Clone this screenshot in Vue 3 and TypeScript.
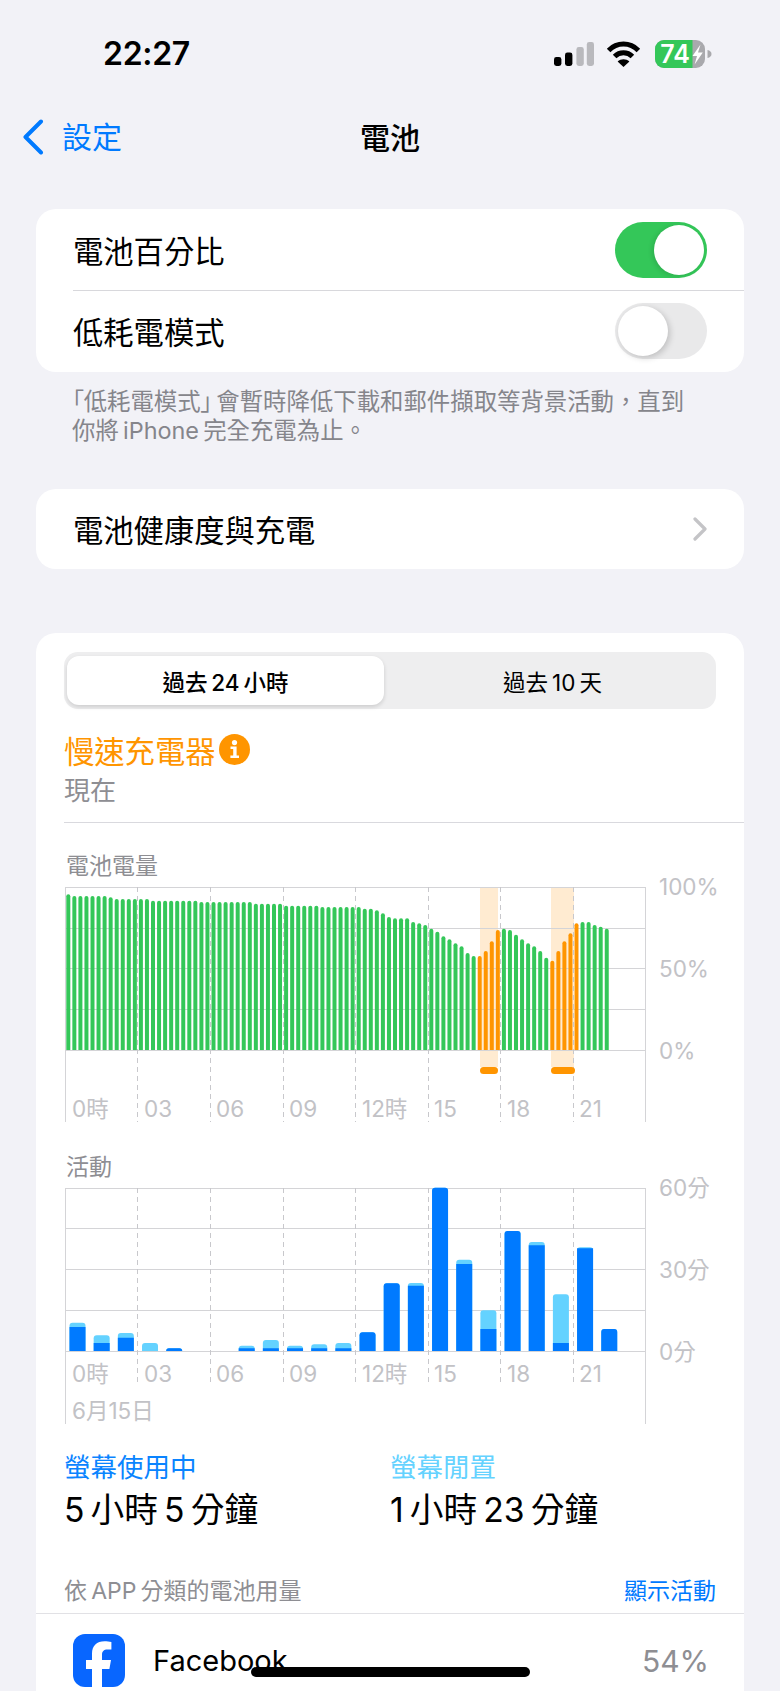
<template>
  <div class="page">
    <header class="status">
      <span class="time">22:27</span>
      <div class="status-icons">
        <svg class="signal" width="40" height="24" viewBox="0 0 40 24">
          <rect x="0" y="15" width="7.4" height="9" rx="2.4" fill="#000" />
          <rect x="11" y="10.6" width="7.4" height="13.4" rx="2.4" fill="#000" />
          <rect x="22.4" y="5" width="7.4" height="19" rx="2.4" fill="#b9b9bd" />
          <rect x="32.8" y="0" width="7.2" height="24" rx="2.4" fill="#b9b9bd" />
        </svg>
        <svg width="35" height="26" viewBox="0 0 35 26">
          <path d="M2.6 9.4C11 1 24 1 32.4 9.4" fill="none" stroke="#000" stroke-width="5" stroke-linecap="butt" />
          <path d="M8.6 15.6C13.6 10.6 21.4 10.6 26.4 15.6" fill="none" stroke="#000" stroke-width="5" />
          <path d="M11.6 20.6C15 17.6 20 17.6 23.4 20.6L17.5 26Z" fill="#000" />
        </svg>
        <svg width="57" height="28" viewBox="0 0 57 28">
          <rect x="0" y="0" width="50" height="28" rx="9" fill="#a9a9ad" />
          <path d="M9 0H37.5V28H9A9 9 0 0 1 0 19V9A9 9 0 0 1 9 0Z" fill="#34c759" />
          <path d="M52.5 10C55 10.6 56.5 12 56.5 14S55 17.4 52.5 18Z" fill="#a9a9ad" />
          <text x="20" y="23" text-anchor="middle" class="batt-text">74</text>
          <path d="M45.5 4.5L37.5 16H42L39.6 24.5L47.8 12.4H43Z" fill="#fff" />
        </svg>
      </div>
    </header>

    <nav class="nav">
      <div class="back">
        <svg width="22" height="36" viewBox="0 0 22 36">
          <path d="M19 2.5L3.5 18L19 33.5" fill="none" stroke="#007aff" stroke-width="4" stroke-linecap="round" stroke-linejoin="round" />
        </svg>
        <span>設定</span>
      </div>
      <h1 class="title">電池</h1>
    </nav>

    <section class="card">
      <div class="row">
        <span>電池百分比</span>
        <div class="toggle on"><i></i></div>
      </div>
      <div class="row">
        <span>低耗電模式</span>
        <div class="toggle"><i></i></div>
      </div>
    </section>
    <p class="footnote"><span class="tight">「低耗電模式」</span>會暫時降低下載和郵件擷取等背景活動&#xFF0C;直到<br />你將&thinsp;iPhone&thinsp;完全充電為止。</p>

    <section class="card health">
      <span>電池健康度與充電</span>
      <svg width="14" height="24" viewBox="0 0 14 24">
        <path d="M2 2L12 12L2 22" fill="none" stroke="#c4c4c7" stroke-width="3.2" stroke-linecap="round" stroke-linejoin="round" />
      </svg>
    </section>

    <section class="card usage">
      <div class="segment">
        <div class="seg-item active">過去&thinsp;24&thinsp;小時</div>
        <div class="seg-item second-seg">過去&thinsp;10&thinsp;天</div>
      </div>

      <div class="charger">
        <span>慢速充電器</span>
        <svg width="31" height="31" viewBox="0 0 31 31">
          <circle cx="15.5" cy="15.5" r="15.5" fill="#ff9500" />
          <circle cx="15.5" cy="8.6" r="2.6" fill="#fff" />
          <path d="M11.5 12.6H17.6V21.6H20V24H11.4V21.6H14.2V15H11.5Z" fill="#fff" />
        </svg>
      </div>
      <div class="now">現在</div>
      <div class="divider"></div>

      <div class="chart-label first">電池電量</div>
      <svg class="chart" width="670" height="245" viewBox="60 880 670 245">
        <rect v-for="b in bands" :key="b.x" :x="b.x" y="887" :width="b.w" height="180" fill="#ffebd1" />
        <line v-for="y in levelLines" :key="y" x1="65.5" x2="645.5" :y1="y" :y2="y" class="grid" />
        <line x1="65.5" x2="65.5" y1="887" y2="1122" class="grid" />
        <line x1="645.5" x2="645.5" y1="887" y2="1122" class="grid" />
        <line v-for="x in dashX" :key="x" :x1="x" :x2="x" y1="887" y2="1122" class="dash" />
        <path v-for="b in levelBars" :key="b.x" :d="topRound(b.x, b.y, 4, 1050 - b.y, 2)" :fill="b.color" />
        <rect v-for="b in bands" :key="'p' + b.x" :x="b.x" y="1067" :width="b.pw" height="7" rx="3.5" fill="#ff9500" />
        <text v-for="h in hours" :key="h.t" :x="h.x" y="1117" class="hour">{{ h.t }}</text>
        <text x="659" y="895" class="axis">100%</text>
        <text x="659" y="977" class="axis">50%</text>
        <text x="659" y="1059" class="axis">0%</text>
      </svg>

      <div class="chart-label second">活動</div>
      <svg class="chart" width="670" height="249" viewBox="60 1181 670 249">
        <line v-for="y in activityLines" :key="y" x1="65.5" x2="645.5" :y1="y" :y2="y" class="grid" />
        <line x1="65.5" x2="65.5" y1="1188" y2="1424" class="grid" />
        <line x1="645.5" x2="645.5" y1="1188" y2="1424" class="grid" />
        <line v-for="x in dashX" :key="x" :x1="x" :x2="x" y1="1188" y2="1383" class="dash" />
        <template v-for="b in activityBars" :key="b.x">
          <path v-if="b.lightY < 1351" :d="topRound(b.x, b.lightY, 16, 1351 - b.lightY, 3)" fill="#64d2ff" />
          <path v-if="b.darkY < 1351" :d="topRound(b.x, b.darkY, 16, 1351 - b.darkY, b.darkY === b.lightY ? 3 : 0)" fill="#007aff" />
        </template>
        <text v-for="h in hours" :key="h.t" :x="h.x" y="1382" class="hour">{{ h.t }}</text>
        <text x="72" y="1419" class="hour">6月15日</text>
        <text x="659" y="1196" class="axis">60分</text>
        <text x="659" y="1278" class="axis">30分</text>
        <text x="659" y="1360" class="axis">0分</text>
      </svg>

      <div class="totals">
        <div class="total">
          <div class="total-label blue">螢幕使用中</div>
          <div class="total-value">5&thinsp;小時&thinsp;5&thinsp;分鐘</div>
        </div>
        <div class="total">
          <div class="total-label cyan">螢幕閒置</div>
          <div class="total-value">1&thinsp;小時&thinsp;23&thinsp;分鐘</div>
        </div>
      </div>

      <div class="list-head">
        <span>依&thinsp;APP&thinsp;分類的電池用量</span>
        <span class="show">顯示活動</span>
      </div>

      <div class="app-row">
        <svg width="52" height="53" viewBox="0 0 52 53">
          <rect width="52" height="53" rx="12" fill="#0866ff" />
          <path d="M29 53V35H36.4L38 26H29V21C29 17.6 30.6 15.6 34.6 15.6H38.4V8C36.4 7.6 33.8 7.2 31.6 7.2C23.8 7.2 19 11.6 19 19.6V26H13V35H19V53Z" fill="#fff" />
        </svg>
        <span class="app-name">Facebook</span>
        <span class="app-pct">54%</span>
      </div>
    </section>

    <div class="home-bar"></div>
  </div>
</template>

<script setup lang="ts">
interface Band {
  x: number;
  w: number;
  pw: number;
}

const topRound = (x: number, y: number, w: number, h: number, r: number) => {
  const rr = Math.min(r, h);
  return `M${x} ${y + h}V${y + rr}Q${x} ${y} ${x + rr} ${y}H${x + w - rr}Q${x + w} ${y} ${x + w} ${y + rr}V${y + h}Z`;
};

// bar tops read off the reference, in thirds of a pixel above the 0% line
const levelTops = [
  133, 138, 138, 138, 138, 138, 138, 142, 147, 147, 147, 147, 147, 147, 152, 152, 152, 152, 152, 152, 152, 152,
  156, 156, 156, 156, 156, 156, 156, 156, 156, 161, 161, 161, 161, 161, 167, 167, 167, 167, 167, 167,
  171, 171, 171, 171, 171, 171, 171, 176, 176, 181, 190, 201, 205, 205, 205, 216, 220, 225, 236, 245,
  259, 268, 280, 289, 309, 318, 318, 303, 274, 240, 236, 240, 254, 268, 280, 289, 303, 323, 332, 303,
  274, 250, 220, 216, 216, 225, 230, 236,
];

const isCharging = (i: number) => (i >= 68 && i <= 71) || (i >= 80 && i <= 84);

const levelBars = levelTops.map((top, i) => ({
  x: 66.3 + i * 6.05,
  y: 850 + top / 3,
  color: isCharging(i) ? '#ff9500' : '#34c759',
}));

const bands: Band[] = [
  { x: 480, w: 18, pw: 18 },
  { x: 551, w: 23, pw: 24 },
];

const levelLines = [887.5, 928.5, 968.5, 1009.5, 1050.5];
const activityLines = [1188.5, 1228.5, 1269.5, 1310.5, 1351.5];
const dashX = [137.5, 210.5, 283.5, 355.5, 428.5, 500.5, 573.5];

const hours = [
  { t: '0時', x: 72 },
  { t: '03', x: 144 },
  { t: '06', x: 216 },
  { t: '09', x: 289 },
  { t: '12時', x: 362 },
  { t: '15', x: 434 },
  { t: '18', x: 507 },
  { t: '21', x: 579 },
];

// [top of whole bar, top of dark part], 603 means empty
const activity: [number, number][] = [
  [518, 531], [556, 579], [549, 563], [579, 603], [595, 595], [603, 603], [603, 603], [587, 595],
  [570, 595], [587, 595], [583, 595], [579, 595], [547, 547], [400, 400], [399, 407], [113, 113],
  [329, 342], [481, 537], [243, 243], [276, 286], [433, 579], [292, 295], [537, 537],
];

const activityBars = activity.map(([light, dark], i) => ({
  x: 69.5 + i * 24.17,
  lightY: 1150 + light / 3,
  darkY: 1150 + dark / 3,
}));
</script>

<style scoped>
.page {
  position: relative;
  width: 780px;
  height: 1691px;
  overflow: hidden;
  background: #f2f2f7;
  color: #000;
  font-family: Inter, "Noto Sans CJK TC", sans-serif;
}

.status {
  height: 107px;
  display: flex;
  align-items: center;
  justify-content: space-between;
  padding: 0 68px 0 103px;
  box-sizing: border-box;
}

.time {
  font-size: 32px;
  font-weight: 600;
  letter-spacing: -0.3px;
}

.status-icons {
  display: flex;
  align-items: center;
  gap: 14px;
}

.signal {
  margin-right: -2px;
}

.batt-text {
  font-family: Inter, sans-serif;
  font-size: 25px;
  font-weight: 600;
  fill: #fff;
}

.nav {
  position: relative;
  height: 60px;
  display: flex;
  align-items: center;
  justify-content: center;
}

.back {
  position: absolute;
  left: 22px;
  top: 12px;
  display: flex;
  align-items: center;
  gap: 18px;
  color: #007aff;
  font-size: 30px;
  line-height: 36px;
}

.title {
  margin: -2px 0 0;
  font-size: 30px;
  font-weight: 500;
}

.card {
  margin: 42px 36px 0;
  background: #fff;
  border-radius: 20px;
}

.row {
  position: relative;
  height: 81px;
  display: flex;
  align-items: center;
  justify-content: space-between;
  padding: 0 37px;
  font-size: 30.3px;
}

.row + .row {
  height: 82px;
}

.row + .row::before {
  content: '';
  position: absolute;
  left: 37px;
  right: 0;
  top: 0;
  height: 1px;
  background: #d8d8dc;
}

.toggle {
  position: relative;
  width: 92px;
  height: 56px;
  border-radius: 28px;
  background: #e9e9ea;
}

.toggle i {
  position: absolute;
  top: 3px;
  left: 3px;
  width: 50px;
  height: 50px;
  border-radius: 50%;
  background: #fff;
  box-shadow: 2px 2px 6px rgba(0, 0, 0, 0.18);
}

.toggle.on {
  background: #34c759;
}

.toggle.on i {
  left: 39px;
  box-shadow: -2px 1px 5px rgba(0, 0, 0, 0.12);
}

.footnote {
  margin: 15px 40px 0 72px;
  color: #85858b;
  font-size: 23.4px;
  line-height: 29px;
}

.tight {
  margin-right: 4px;
  font-feature-settings: "palt";
}

.health {
  margin-top: 44px;
  height: 80px;
  display: flex;
  align-items: center;
  justify-content: space-between;
  padding: 0 37px;
  font-size: 30.3px;
}

.usage {
  margin-top: 64px;
  padding-top: 19px;
  height: 1100px;
  border-radius: 20px 20px 0 0;
}

.segment {
  margin: 0 28px;
  height: 57px;
  padding: 4px 3px;
  box-sizing: border-box;
  display: grid;
  grid-template-columns: 317px 1fr;
  background: #eeeeef;
  border-radius: 14px;
}

.seg-item {
  display: flex;
  align-items: center;
  justify-content: center;
  font-size: 22.5px;
  white-space: pre;
}

.second-seg {
  padding-left: 8px;
}

.seg-item.active {
  background: #fff;
  border-radius: 12px;
  font-weight: 500;
  box-shadow: 0 2px 4px rgba(0, 0, 0, 0.14);
}

.charger {
  margin: 25px 0 0 28px;
  height: 31px;
  display: flex;
  align-items: center;
  gap: 4px;
  color: #ff9500;
  font-size: 30.3px;
}

.now {
  margin: 8px 0 0 28px;
  color: #8e8e93;
  font-size: 26px;
  line-height: 36px;
}

.divider {
  margin: 13px 0 0 28px;
  height: 1px;
  background: #d9d9de;
}

.chart-label {
  margin-left: 30px;
  color: #8e8e93;
  font-size: 23px;
  line-height: 28px;
}

.chart-label.first {
  margin-top: 29px;
}

.chart-label.second {
  margin-top: 28px;
}

.chart {
  display: block;
  margin: 0 0 0 24px;
  overflow: visible;
}

.grid {
  stroke: #d4d4d7;
  stroke-width: 1;
}

.dash {
  stroke: #c8c8cc;
  stroke-width: 1;
  stroke-dasharray: 5 4;
}

.hour {
  fill: #c2c2c6;
  font-size: 22.5px;
}

.axis {
  fill: #c2c2c6;
  font-size: 22.5px;
}

.totals {
  display: grid;
  grid-template-columns: 326px 1fr;
  margin: 19px 0 0 28px;
}

.total-label {
  font-size: 26.5px;
  line-height: 36px;
}

.blue {
  color: #0a84ff;
}

.cyan {
  color: #64d2ff;
}

.total-value {
  margin-top: 3px;
  font-size: 33.7px;
  line-height: 44px;
}

.list-head {
  display: flex;
  align-items: center;
  justify-content: space-between;
  margin: 43px 28px 0 28px;
  color: #8e8e93;
  font-size: 23px;
  line-height: 32px;
}

.show {
  color: #007aff;
}

.app-row {
  display: flex;
  align-items: center;
  margin-top: 6px;
  padding: 20px 35px 0 37px;
  border-top: 1px solid #e1e1e5;
}

.app-name {
  margin-left: 28px;
  font-size: 29px;
}

.app-pct {
  margin-left: auto;
  color: #8e8e93;
  font-size: 30px;
}

.home-bar {
  position: absolute;
  left: 251px;
  top: 1667px;
  width: 279px;
  height: 10px;
  border-radius: 5px;
  background: #000;
}
</style>

<style>
body {
  background: #f2f2f7;
}
</style>
